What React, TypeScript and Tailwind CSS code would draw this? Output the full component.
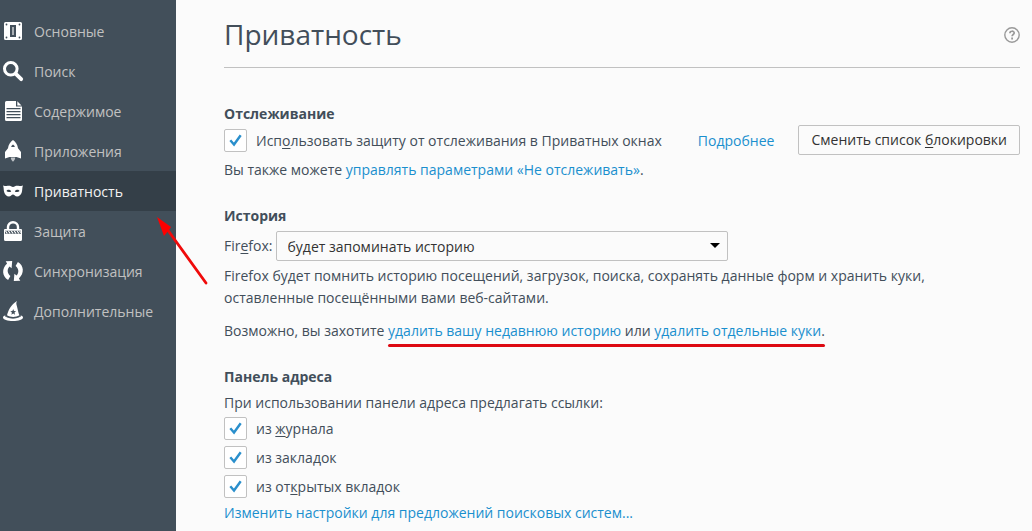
import React, { useState } from "react";

// --- ICONS ---

const GeneralIcon = () => (
  <svg viewBox="0 0 24 24" className="size-6 shrink-0" fill="currentColor" aria-hidden="true">
    <path
      fillRule="evenodd"
      d="M4.500 3h15A1.500 1.500 0 0 1 21 4.500v15a1.500 1.500 0 0 1-1.500 1.500h-15A1.500 1.500 0 0 1 3 19.500v-15A1.500 1.500 0 0 1 4.500 3zM9 6v12h6V6zM5.500 4.600a.9.9 0 1 0 0 1.800.9.9 0 0 0 0-1.800zM18.500 4.600a.9.9 0 1 0 0 1.800.9.9 0 0 0 0-1.800zM5.500 17.600a.9.9 0 1 0 0 1.800.9.9 0 0 0 0-1.800zM18.500 17.600a.9.9 0 1 0 0 1.800.9.9 0 0 0 0-1.800z"
    />
    <path d="M11 8h2v8h-2z" opacity=".55" />
  </svg>
);

const SearchIcon = () => (
  <svg viewBox="0 0 24 24" className="size-6 shrink-0" fill="none" stroke="currentColor" aria-hidden="true">
    <circle cx="9.800" cy="9.800" r="6.300" strokeWidth="3" />
    <path d="M14.800 14.800l5.400 5.400" strokeWidth="3.800" strokeLinecap="round" />
  </svg>
);

const ContentIcon = () => (
  <svg viewBox="0 0 24 24" className="size-6 shrink-0" fill="currentColor" aria-hidden="true">
    <path
      fillRule="evenodd"
      d="M5.500 2H15v5.500h6v13a1.500 1.500 0 0 1-1.500 1.500h-14A1.500 1.500 0 0 1 4 20.500v-17A1.500 1.500 0 0 1 5.500 2zM5.500 9v1.200h14V9zM5.500 12v1.200h14V12zM5.500 15v1.200h14V15zM5.500 18v1.200h14V18z"
    />
    <path d="M16.300 2.300l4.200 4.100h-4.200z" />
  </svg>
);

const ApplicationsIcon = () => (
  <svg viewBox="0 0 24 24" className="size-6 shrink-0" fill="currentColor" aria-hidden="true">
    <path
      fillRule="evenodd"
      d="M12 1c2.500 1.800 4.700 4.600 5 8.300L20 13v6.500L15.500 18h-7L4 19.500V13l3-3.700C7.300 5.600 9.500 2.800 12 1zm0 4.500c-.9.600-1.600 1.400-1.900 2.500h3.800c-.3-1.100-1-1.900-1.900-2.500z"
    />
    <path d="M9.800 18.500h4.400c0 1.600-.8 2.800-2.200 4.200-1.400-1.400-2.200-2.600-2.200-4.200z" opacity=".65" />
  </svg>
);

const PrivacyIcon = () => (
  <svg viewBox="0 0 24 24" className="size-6 shrink-0" fill="currentColor" aria-hidden="true">
    <path
      fillRule="evenodd"
      d="M2 6.500c4.500 1.300 5.500-.4 8 .8.800.4 1.300.8 2 .8s1.200-.4 2-.8c2.500-1.200 3.500.5 8-.8-1 2-.4 4-1.200 6.700-.8 2.600-2.500 4.300-4.700 4.300-2 0-2.700-2-4.100-2s-2.100 2-4.100 2c-2.200 0-3.900-1.700-4.700-4.300C2.400 10.500 3 8.500 2 6.500zM5.400 12.100c1.200 1.300 3.600 1.300 4.800.3-1-1.900-3.800-2.100-4.800-.3zm13.200 0c-1-1.800-3.800-1.600-4.800.3 1.200 1 3.600 1 4.800-.3z"
    />
  </svg>
);

const SecurityIcon = () => (
  <svg viewBox="0 0 24 24" className="size-6 shrink-0" fill="currentColor" aria-hidden="true">
    <path d="M7 11V8a5 4.800 0 0 1 10 0v3" fill="none" stroke="currentColor" strokeWidth="2.400" />
    <path
      fillRule="evenodd"
      d="M4 10h16a1 1 0 0 1 1 1v9.500a1.500 1.500 0 0 1-1.500 1.500h-15A1.500 1.500 0 0 1 3 20.500V11a1 1 0 0 1 1-1zm0 1.800v2.900h16v-2.900z"
    />
    <path
      d="M4.500 12l1.800 2.500M7.400 12l1.800 2.500M10.300 12l1.800 2.500M13.200 12l1.800 2.500M16.100 12l1.800 2.500M18.600 12l1.200 1.700"
      fill="none"
      stroke="currentColor"
      strokeWidth="1.200"
    />
  </svg>
);

const SyncIcon = () => (
  <svg viewBox="0 0 24 24" className="size-6 shrink-0" fill="currentColor" aria-hidden="true">
    <path d="M4.700 2.300L11.200 2l-.6 7.300-2.100-1.900c-2.700 2.900-2.400 6.800.9 9.600l-2.300 4C1 17.400.4 9.800 6.100 4.600z" />
    <path d="M19.300 21.700l-6.500.3.600-7.300 2.100 1.900c2.700-2.900 2.400-6.800-.9-9.600l2.300-4c6.100 3.600 6.700 11.200 1 16.400z" />
  </svg>
);

const AdvancedIcon = () => (
  <svg viewBox="0 0 24 24" className="size-6 shrink-0" fill="currentColor" aria-hidden="true">
    <path
      fillRule="evenodd"
      d="M6 16.300C7.500 11 10 5.500 16 2c-1.200 2.200-.6 3.500 0 5.500.8 2.800 1.200 6 2.400 8.800-3.500 2.300-8.900 2.300-12.400 0zm6.200-6.200l-.8 1.900-2.100.2 1.600 1.400-.5 2.100 1.800-1.100 1.800 1.100-.5-2.100 1.600-1.400-2.100-.2z"
    />
    <path d="M4.200 16.600c4 3.500 11.600 3.500 15.600 0 1.300.4 2.200 1.100 2.200 1.900 0 2-4.500 3.500-10 3.500S2 20.500 2 18.500c0-.8.9-1.500 2.200-1.900z" />
    <path d="M4 16.800c4.500 3 11.500 3 16 0" fill="none" stroke="#424f5a" strokeWidth="1" />
  </svg>
);

const HelpIcon = () => (
  <svg viewBox="0 0 16 16" className="size-4" fill="none" stroke="#999" aria-hidden="true">
    <circle cx="8" cy="8" r="7.200" strokeWidth="1.400" />
    <path d="M5.900 6.200c0-2.600 4.300-2.600 4.300-.2 0 1.500-2.100 1.500-2.100 3.300" strokeWidth="1.700" />
    <path d="M7.200 10.600H9v1.800H7.200z" fill="#999" stroke="none" />
  </svg>
);

// --- UI COMPONENTS ---

const categories = [
  { id: "general", label: "Основные", icon: GeneralIcon },
  { id: "search", label: "Поиск", icon: SearchIcon },
  { id: "content", label: "Содержимое", icon: ContentIcon },
  { id: "applications", label: "Приложения", icon: ApplicationsIcon },
  { id: "privacy", label: "Приватность", icon: PrivacyIcon },
  { id: "security", label: "Защита", icon: SecurityIcon },
  { id: "sync", label: "Синхронизация", icon: SyncIcon },
  { id: "advanced", label: "Дополнительные", icon: AdvancedIcon },
];

const SidebarItem = ({ icon: Icon, label, href, active = false }: any) => (
  <a
    href={href}
    aria-current={active ? "page" : undefined}
    className={`flex h-10 items-center gap-[9px] pl-px ${
      active ? "bg-[#343f48] text-[#f2f2f2]" : "text-[#c1c1c1] hover:bg-[#5e6972]"
    }`}
  >
    <span className="text-white">
      <Icon />
    </span>
    <span className="pt-0.5">{label}</span>
  </a>
);

const TextLink = ({ children }: any) => (
  <a href="#" className="text-[#1a8fce] hover:underline">
    {children}
  </a>
);

const Key = ({ children }: any) => (
  <span className="underline decoration-1 underline-offset-2">{children}</span>
);

const Checkbox = ({ children }: any) => {
  const [checked, setChecked] = useState(true);

  return (
    <label className="flex items-center gap-[9px]">
      <span className="relative flex">
        <input
          type="checkbox"
          checked={checked}
          onChange={(e) => setChecked(e.target.checked)}
          className="size-[23px] appearance-none rounded-xs border border-[#c1c1c1] bg-white"
        />
        {checked && (
          <svg
            viewBox="0 0 23 23"
            className="pointer-events-none absolute inset-0 size-full"
            fill="none"
            stroke="#2a8fcc"
            strokeWidth="2.400"
            aria-hidden="true"
          >
            <path d="M6.300 11.300l3.700 4.200 6.700-9.300" />
          </svg>
        )}
      </span>
      <span className="pt-0.5">{children}</span>
    </label>
  );
};

export default function App() {
  const [history, setHistory] = useState("remember");

  return (
    <div className="relative flex min-h-screen bg-[#fbfbfb] font-['Open_Sans','Noto_Sans',sans-serif] text-[14px] leading-[22px] text-[#424e5a]">
      <nav className="w-44 shrink-0 bg-[#424f5a] pt-[11px]">
        {categories.map((c) => (
          <SidebarItem
            key={c.id}
            icon={c.icon}
            label={c.label}
            href={`#${c.id}`}
            active={c.id === "privacy"}
          />
        ))}
      </nav>

      <main className="min-w-0 flex-1 pr-3 pl-12">
        <header className="flex h-[68px] items-center justify-between border-b border-[#c1c1c1] pt-0.5">
          <h1 className="pb-0.5 text-[28px] leading-10">Приватность</h1>
          <button type="button" aria-label="Справка">
            <HelpIcon />
          </button>
        </header>

        {/* Tracking */}
        <section className="pt-[35px]">
          <h2 className="font-bold">Отслеживание</h2>
          <div className="flex items-center">
            <Checkbox>
              Исп<Key>о</Key>льзовать защиту от отслеживания в Приватных окнах
            </Checkbox>
            <span className="ml-9 pt-0.5">
              <TextLink>Подробнее</TextLink>
            </span>
            <button
              type="button"
              className="ml-auto h-[30px] rounded-xs border border-[#c1c1c1] bg-[#fbfbfb] px-3 leading-5 whitespace-nowrap text-[#333]"
            >
              Сменить список <Key>б</Key>локировки
            </button>
          </div>
          <p className="mt-1">
            Вы также можете <TextLink>управлять параметрами «Не отслеживать»</TextLink>.
          </p>
        </section>

        {/* History */}
        <section className="pt-6">
          <h2 className="font-bold">История</h2>
          <div className="mt-1 flex items-center gap-[3px]">
            <label htmlFor="history">
              Fir<Key>e</Key>fox:
            </label>
            <span className="relative w-[452px]">
              <select
                id="history"
                value={history}
                onChange={(e) => setHistory(e.target.value)}
                className="block h-[30px] w-full appearance-none rounded-xs border border-[#c1c1c1] bg-[#fbfbfb] px-[11px] pt-0.5 text-[#333]"
              >
                <option value="remember">будет запоминать историю</option>
                <option value="never">не будет запоминать историю</option>
                <option value="custom">будет использовать ваши настройки</option>
              </select>
              <svg
                viewBox="0 0 10 5"
                className="pointer-events-none absolute top-3 right-2 h-[5px] w-2.5"
                fill="#000"
                aria-hidden="true"
              >
                <path d="M0 0h10L5 5z" />
              </svg>
            </span>
          </div>
          <p className="mt-1 max-w-[740px]">
            Firefox будет помнить историю посещений, загрузок, поиска, сохранять данные форм и
            хранить куки, оставленные посещёнными вами веб-сайтами.
          </p>
          <p className="mt-[11px]">
            Возможно, вы захотите{" "}
            <span className="relative inline-block">
              <TextLink>удалить вашу недавнюю историю</TextLink> или{" "}
              <TextLink>удалить отдельные куки</TextLink>.
              <span className="absolute inset-x-0 top-full mt-0.5 h-[3px] rounded-full bg-[#dd0a12]" />
            </span>
          </p>
        </section>

        {/* Location bar */}
        <section className="pt-6">
          <h2 className="font-bold">Панель адреса</h2>
          <p className="mt-1">При использовании панели адреса предлагать ссылки:</p>
          <div className="mt-0.5 flex flex-col gap-[5px]">
            <Checkbox>
              из <Key>ж</Key>урнала
            </Checkbox>
            <Checkbox>
              из закла<Key>д</Key>ок
            </Checkbox>
            <Checkbox>
              из от<Key>к</Key>рытых вкладок
            </Checkbox>
          </div>
          <p className="mt-1">
            <TextLink>Изменить настройки для предложений поисковых систем...</TextLink>
          </p>
        </section>
      </main>

      {/* Arrow pointing at the active category */}
      <svg
        viewBox="0 0 52 70"
        className="pointer-events-none absolute top-[216px] left-[156px] h-[70px] w-[52px]"
        aria-hidden="true"
      >
        <path d="M11 13l39 54" stroke="#f00a0a" strokeWidth="2.800" strokeLinecap="round" />
        <path d="M1 1l14 10-2 3-5 6z" fill="#f00" />
      </svg>
    </div>
  );
}
